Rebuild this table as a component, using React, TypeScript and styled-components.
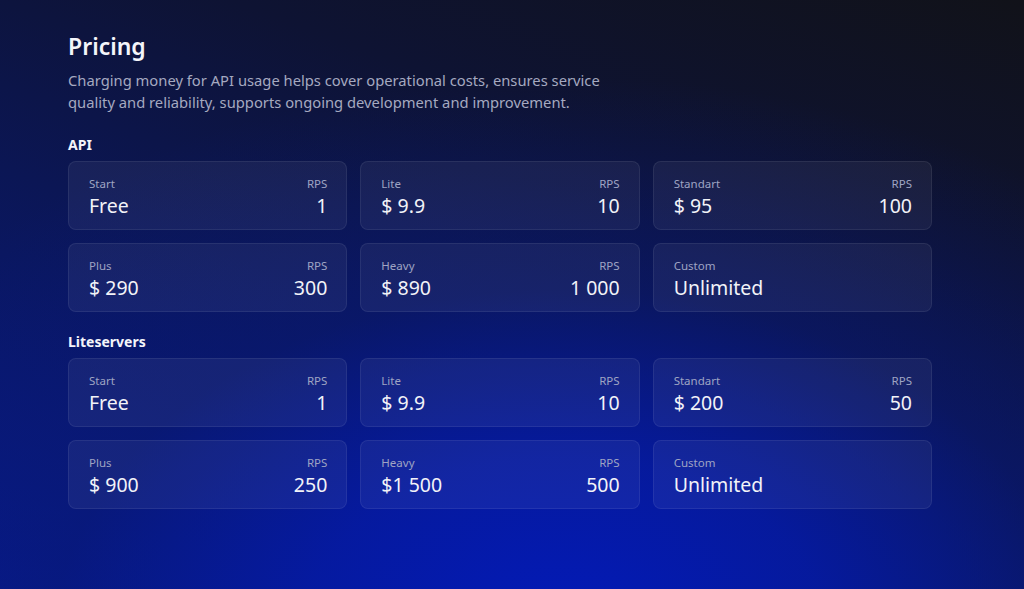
import React from "react";
import styled, { createGlobalStyle } from "styled-components";

const Global = createGlobalStyle`
  html, body { margin: 0; padding: 0; height: 100%; }
  body {
    font-family: "Noto Sans", "Open Sans", sans-serif;
    background: #0c1447;
  }
  #root { min-height: 100%; }
`;

const Page = styled.div`
  box-sizing: border-box;
  width: 100%;
  min-height: 589px;
  padding: 30px 68px 40px 68px;
  color: #ffffff;
  background:
    radial-gradient(ellipse 80% 95% at 55% 108%, rgba(3, 26, 185, 1) 0%, rgba(5, 26, 165, 0.88) 32%, rgba(8, 24, 120, 0.5) 62%, rgba(8, 20, 80, 0) 100%),
    linear-gradient(200deg, #111219 0%, #0e1333 30%, #0a1760 65%, #071a8c 100%);
`;

const Title = styled.h1`
  margin: 0;
  font-size: 23px;
  line-height: 32px;
  font-weight: 600;
  color: #f4f5fa;
`;

const Description = styled.p`
  margin: 7px 0 0 0;
  max-width: 560px;
  font-size: 14.75px;
  line-height: 22px;
  color: #a5a9c0;
`;

const SectionTitle = styled.h2<{ $first?: boolean }>`
  margin: ${(p) => (p.$first ? "22px" : "20px")} 0 6px 0;
  font-size: 14px;
  line-height: 20px;
  font-weight: 700;
  color: #f4f5fa;
`;

const Grid = styled.div`
  display: grid;
  grid-template-columns: repeat(3, 1fr);
  column-gap: 13px;
  row-gap: 13px;
  width: 864px;
`;

const Card = styled.div`
  box-sizing: border-box;
  height: 69px;
  padding: 14px 19px 0 20px;
  border-radius: 8px;
  background: rgba(255, 255, 255, 0.055);
  border: 1px solid rgba(255, 255, 255, 0.07);
  display: flex;
  justify-content: space-between;
`;

const Col = styled.div<{ $right?: boolean }>`
  display: flex;
  flex-direction: column;
  align-items: ${(p) => (p.$right ? "flex-end" : "flex-start")};
`;

const Label = styled.span`
  font-size: 11.5px;
  line-height: 16px;
  color: #9fa4c3;
`;

const Value = styled.span`
  margin-top: 1px;
  font-size: 19.5px;
  line-height: 26px;
  color: #f2f3f8;
`;

type Plan = { name: string; price: string; rps?: string };

const api: Plan[] = [
  { name: "Start", price: "Free", rps: "1" },
  { name: "Lite", price: "$ 9.9", rps: "10" },
  { name: "Standart", price: "$ 95", rps: "100" },
  { name: "Plus", price: "$ 290", rps: "300" },
  { name: "Heavy", price: "$ 890", rps: "1 000" },
  { name: "Custom", price: "Unlimited" },
];

const lite: Plan[] = [
  { name: "Start", price: "Free", rps: "1" },
  { name: "Lite", price: "$ 9.9", rps: "10" },
  { name: "Standart", price: "$ 200", rps: "50" },
  { name: "Plus", price: "$ 900", rps: "250" },
  { name: "Heavy", price: "$1 500", rps: "500" },
  { name: "Custom", price: "Unlimited" },
];

const PlanCard = ({ plan }: { plan: Plan }) => (
  <Card>
    <Col>
      <Label>{plan.name}</Label>
      <Value>{plan.price}</Value>
    </Col>
    {plan.rps && (
      <Col $right>
        <Label>RPS</Label>
        <Value>{plan.rps}</Value>
      </Col>
    )}
  </Card>
);

export default function App() {
  return (
    <>
      <Global />
      <Page>
        <Title>Pricing</Title>
        <Description>
          Charging money for API usage helps cover operational costs, ensures service
          quality and reliability, supports ongoing development and improvement.
        </Description>
        <SectionTitle $first>API</SectionTitle>
        <Grid>
          {api.map((p) => (
            <PlanCard key={p.name} plan={p} />
          ))}
        </Grid>
        <SectionTitle>Liteservers</SectionTitle>
        <Grid>
          {lite.map((p) => (
            <PlanCard key={p.name} plan={p} />
          ))}
        </Grid>
      </Page>
    </>
  );
}
